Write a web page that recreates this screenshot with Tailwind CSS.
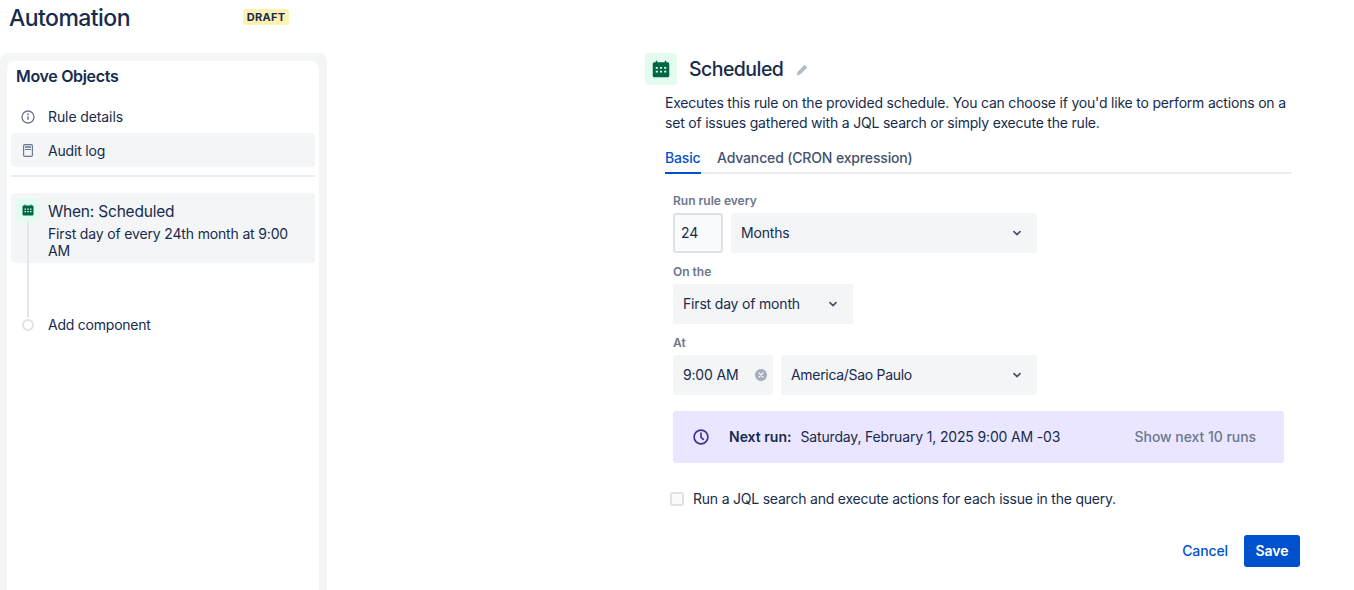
<!DOCTYPE html>
<html lang="en">
  <head>
    <meta charset="UTF-8" />
    <meta name="viewport" content="width=device-width, initial-scale=1.0" />
    <title>Automation</title>
    <script src="https://cdn.jsdelivr.net/npm/@tailwindcss/browser@4"></script>
  </head>
  <body class="bg-white font-['Inter',sans-serif] text-[14px] leading-5 tracking-[-0.18px] text-[#172b4d] h-[590px] overflow-hidden">
    <div class="flex h-[590px] overflow-hidden">
      <!-- Left column -->
      <div class="w-[327px] shrink-0 flex flex-col">
        <div class="h-[53px] relative">
          <h1 class="absolute left-[9px] top-[3px] text-[23px] leading-[30px] font-medium tracking-[-0.55px]">Automation</h1>
          <span class="absolute left-[243px] top-[9px] h-4 w-[46px] flex items-center justify-center rounded-[3px] bg-[#fff0b3] text-[11px] font-bold tracking-[0.3px]">DRAFT</span>
        </div>
        <div class="flex-1 bg-[#f4f5f7] rounded-t-lg pl-[7px] pr-2 pt-2">
          <div class="h-full bg-white rounded-t-lg px-1 relative">
            <h2 class="pl-[5px] pt-[5px] text-[16px] leading-5 font-semibold tracking-[-0.33px]">Move Objects</h2>
            <div class="mt-[14px] h-[33px] flex items-center rounded">
              <svg class="ml-[10px] w-[14px] h-[14px] text-[#6b778c]" viewBox="0 0 14 14" fill="none" stroke="currentColor"><circle cx="7" cy="7" r="6" stroke-width="1.3"/><path d="M7 6.3v3.5" stroke-width="1.5"/><circle cx="7" cy="4.2" r=".9" fill="currentColor" stroke="none"/></svg>
              <span class="ml-[13px] tracking-[-0.1px]">Rule details</span>
            </div>
            <div class="h-[34px] flex items-center rounded bg-[#f4f5f7]">
              <svg class="ml-[12px] w-[10px] h-[13px] text-[#6b778c]" viewBox="0 0 10 13" fill="none"><rect x=".6" y=".6" width="8.8" height="11.8" rx="1.2" stroke="currentColor" stroke-width="1.2"/><path d="M2 2.2h6v1.6H2zM2 5h6v1H2z" fill="currentColor"/></svg>
              <span class="ml-[15px] pt-px">Audit log</span>
            </div>
            <div class="mt-2 h-0.5 bg-[#ebecf0]"></div>
            <div class="mt-4 relative">
              <div class="relative h-[70px] rounded bg-[#f4f5f7] pl-[37px] pr-3 pt-[9px]">
                <div class="absolute left-[5px] top-[5px] w-6 h-6 rounded bg-[#e3fcef] flex items-center justify-center">
                  <svg class="w-3 h-3" viewBox="0 0 12 12"><path fill="#006644" d="M2.5 0.5h1v1h5v-1h1v1h1a1 1 0 0 1 1 1v8a1 1 0 0 1-1 1h-9a1 1 0 0 1-1-1v-8a1 1 0 0 1 1-1h1z"/><path fill="#e3fcef" d="M2.5 4.5h1.5v1.300H2.500zM5.250 4.500h1.500v1.300h-1.500zM8 4.500h1.500v1.300H8zM2.500 7h1.500v1.300H2.500zM5.250 7h1.500v1.300h-1.500zM8 7h1.500v1.300H8z"/></svg>
                </div>
                <div class="text-[15.5px] leading-5 tracking-[-0.2px]">When: Scheduled</div>
                <div class="mt-[3px] leading-[17px] tracking-[-0.16px]">First day of every 24th month at 9:00 AM</div>
              </div>
              <div class="absolute left-4 top-[29px] w-0.5 h-[95px] bg-[#e4e5ea]"></div>
              <div class="relative mt-[52px] pl-[37px] leading-5 tracking-[-0.23px]">
                <div class="absolute left-[11px] top-1 w-3 h-3 rounded-full border-2 border-[#dfe1e6] bg-white"></div>
                Add component
              </div>
            </div>
          </div>
        </div>
      </div>

      <!-- Right panel -->
      <div class="ml-[318px] w-[655px] pt-[53px]">
        <div class="flex items-center h-8">
          <div class="w-8 h-8 rounded bg-[#e3fcef] flex items-center justify-center">
            <svg class="w-[18px] h-[18px]" viewBox="0 0 12 12"><path fill="#006644" d="M2.500 0.500h1v1h5v-1h1v1h1a1 1 0 0 1 1 1v8a1 1 0 0 1-1 1h-9a1 1 0 0 1-1-1v-8a1 1 0 0 1 1-1h1z"/><path fill="#e3fcef" d="M2.500 4.700h1.400v1.200H2.500zM5.300 4.700h1.400v1.200H5.300zM8.100 4.700h1.400v1.200H8.100zM2.500 7.200h1.400v1.200H2.500zM5.300 7.200h1.400v1.200H5.300zM8.100 7.200h1.400v1.200H8.100z"/></svg>
          </div>
          <h2 class="ml-3 text-[19.5px] leading-6 font-medium tracking-[-0.55px]">Scheduled</h2>
          <svg class="ml-[13px] w-3 h-3 mt-0.5" viewBox="0 0 12 12" fill="#b3bac5"><path d="M8.600 0.800l2.700 2.700-7.100 7.100L0.700 11.400l0.800-3.500z"/></svg>
        </div>
        <p class="ml-5 mt-2 w-[630px] tracking-[-0.2px]">Executes this rule on the provided schedule. You can choose if you'd like to perform actions on a set of issues gathered with a JQL search or simply execute the rule.</p>

        <div class="ml-5 mt-[15px] w-[627px] border-b-2 border-[#ebecf0] flex h-[26px]">
          <div class="h-[26px] w-9 border-b-2 border-[#0052cc] font-medium text-[#0052cc] whitespace-nowrap">Basic</div>
          <div class="ml-4 font-medium text-[#42526e] tracking-[-0.15px]">Advanced (CRON expression)</div>
        </div>

        <div class="ml-7">
          <div class="mt-[19px] text-[12px] leading-4 font-semibold tracking-normal text-[#6b778c]">Run rule every</div>
          <div class="mt-1 flex gap-2">
            <div class="w-[50px] h-10 rounded-[3px] border-2 border-[#dfe1e6] bg-[#fafbfc] flex items-center pl-[6px]">24</div>
            <div class="w-[306px] h-10 rounded-[3px] bg-[#f4f5f7] flex items-center justify-between pl-[10px] pr-[15px]">
              Months
              <svg class="w-[10px] h-2 text-[#42526e]" viewBox="0 0 10 8" fill="none" stroke="currentColor" stroke-width="1.700" stroke-linecap="round"><path d="M2 2.700L5 5.600l3-2.900"/></svg>
            </div>
          </div>

          <div class="mt-[11px] text-[12px] leading-4 font-semibold tracking-normal text-[#6b778c]">On the</div>
          <div class="mt-1 w-[180px] h-10 rounded-[3px] bg-[#f4f5f7] flex items-center justify-between pl-[10px] pr-[15px]">
            First day of month
            <svg class="w-[10px] h-2 text-[#42526e]" viewBox="0 0 10 8" fill="none" stroke="currentColor" stroke-width="1.700" stroke-linecap="round"><path d="M2 2.700L5 5.600l3-2.900"/></svg>
          </div>

          <div class="mt-[11px] text-[12px] leading-4 font-semibold tracking-normal text-[#6b778c]">At</div>
          <div class="mt-1 flex gap-2">
            <div class="w-[100px] h-10 rounded-[3px] bg-[#f4f5f7] flex items-center justify-between pl-[10px] pr-[6px]">
              9:00 AM
              <svg class="w-3 h-3" viewBox="0 0 12 12"><circle cx="6" cy="6" r="6" fill="#a5adba"/><path d="M4 4l4 4M8 4l-4 4" stroke="#f4f5f7" stroke-width="1.300" stroke-linecap="round"/></svg>
            </div>
            <div class="w-[256px] h-10 rounded-[3px] bg-[#f4f5f7] flex items-center justify-between pl-[10px] pr-[15px] tracking-[-0.3px]">
              America/Sao Paulo
              <svg class="w-[10px] h-2 text-[#42526e]" viewBox="0 0 10 8" fill="none" stroke="currentColor" stroke-width="1.700" stroke-linecap="round"><path d="M2 2.700L5 5.600l3-2.900"/></svg>
            </div>
          </div>

          <div class="mt-4 w-[611px] h-[52px] rounded-[3px] bg-[#eae6ff] flex items-center pl-5 pr-7">
            <svg class="w-4 h-4 text-[#403294]" viewBox="0 0 16 16" fill="none" stroke="currentColor" stroke-width="1.700" stroke-linecap="round" stroke-linejoin="round"><circle cx="8" cy="8" r="6.900"/><path d="M8 4.200V8.300l2.400 2"/></svg>
            <span class="ml-5 font-semibold tracking-normal">Next run:</span>
            <span class="ml-[9px] tracking-[-0.16px]">Saturday, February 1, 2025 9:00 AM -03</span>
            <span class="ml-auto font-medium tracking-[-0.05px] text-[#6b778c]">Show next 10 runs</span>
          </div>

          <div class="mt-[26px] -ml-[3px] flex items-center h-5">
            <div class="w-[14px] h-[14px] rounded-[3px] border-2 border-[#dfe1e6] bg-[#fafbfc]"></div>
            <span class="ml-[9px] tracking-[-0.215px]">Run a JQL search and execute actions for each issue in the query.</span>
          </div>
        </div>

        <div class="mt-[26px] flex justify-end items-center">
          <span class="font-medium tracking-[-0.1px] text-[#0052cc]">Cancel</span>
          <button class="ml-4 w-14 h-8 rounded-[3px] bg-[#0052cc] text-white font-semibold tracking-normal">Save</button>
        </div>
      </div>
    </div>
  </body>
</html>
